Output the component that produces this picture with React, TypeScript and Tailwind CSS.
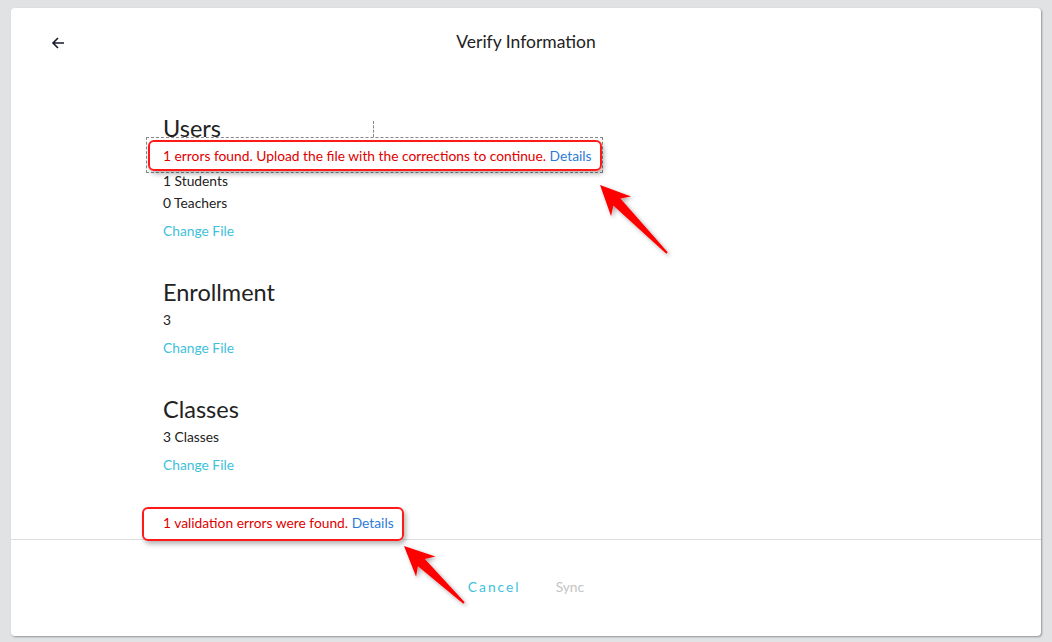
import React from "react";

function Arrow({ className, x1, y1, x2, y2 }: { className: string; x1: number; y1: number; x2: number; y2: number }) {
  const dx = x2 - x1;
  const dy = y2 - y1;
  const len = Math.sqrt(dx * dx + dy * dy);
  const ux = dx / len;
  const uy = dy / len;
  const px = -uy;
  const py = ux;
  const headLen = 30;
  const headW = 14;
  const neckW = 5;
  const bx = x1 + ux * headLen;
  const by = y1 + uy * headLen;
  const nx = x1 + ux * (headLen - 6);
  const ny = y1 + uy * (headLen - 6);
  const pts = [
    [x1, y1],
    [bx + px * headW, by + py * headW],
    [nx + px * neckW, ny + py * neckW],
    [x2 + px * 1, y2 + py * 1],
    [x2 - px * 1, y2 - py * 1],
    [nx - px * neckW, ny - py * neckW],
    [bx - px * headW, by - py * headW],
  ]
    .map((p) => p.join(","))
    .join(" ");
  return (
    <svg className={className} width="1052" height="642" viewBox="0 0 1052 642">
      <defs>
        <filter id="sh" x="-20%" y="-20%" width="140%" height="140%">
          <feDropShadow dx="2" dy="2" stdDeviation="2" floodColor="#000" floodOpacity="0.35" />
        </filter>
      </defs>
      <polygon points={pts} fill="#ff0000" filter="url(#sh)" />
    </svg>
  );
}

export default function App() {
  const font = { fontFamily: "Lato, 'Open Sans', sans-serif" };
  return (
    <div className="relative w-[1052px] h-[642px] bg-[#e1e2e4] overflow-hidden pt-[8px] pl-[11px]" style={font}>
      <div className="w-[1030px] h-[628px] bg-white rounded-[4px] shadow-[1px_1px_2px_rgba(0,0,0,0.35)] flex flex-col">
        <div className="relative h-[70px] flex items-center justify-center">
          <svg className="absolute left-[40px] top-[28px]" width="14" height="14" viewBox="0 0 14 14">
            <path d="M13 7H2M7 2L2 7l5 5" fill="none" stroke="#1a1a2e" strokeWidth="1.6" />
          </svg>
          <div className="text-[17.5px] text-[#222] leading-none mt-[-2px]">Verify Information</div>
        </div>
        <div className="flex-1 pl-[152px] pt-[37px] text-[#222]">
          <div className="text-[23.5px] leading-[26px]">Users</div>
          <div className="text-[13.8px] leading-[18px] mt-[6px] text-[#e00000]">
            1 errors found. Upload the file with the corrections to continue.{" "}
            <span className="text-[#2b7bd6]">Details</span>
          </div>
          <div className="text-[13.8px] leading-[22px] mt-[5px]">1 Students</div>
          <div className="text-[13.8px] leading-[22px]">0 Teachers</div>
          <div className="text-[13.8px] leading-[18px] mt-[8px] text-[#3ebfdb]">Change File</div>

          <div className="text-[23.5px] leading-[26px] mt-[39px]">Enrollment</div>
          <div className="text-[13.8px] leading-[18px] mt-[6px]">3</div>
          <div className="text-[13.8px] leading-[18px] mt-[10px] text-[#3ebfdb]">Change File</div>

          <div className="text-[23.5px] leading-[26px] mt-[39px]">Classes</div>
          <div className="text-[13.8px] leading-[18px] mt-[6px]">3 Classes</div>
          <div className="text-[13.8px] leading-[18px] mt-[10px] text-[#3ebfdb]">Change File</div>

          <div className="text-[13.8px] leading-[18px] mt-[40px] text-[#e00000]">
            1 validation errors were found. <span className="text-[#2b7bd6]">Details</span>
          </div>
        </div>
        <div className="h-[97px] border-t border-[#dedede] flex justify-center items-start pt-[37px] gap-[35px]">
          <div className="text-[13.8px] tracking-[2px] text-[#3ebfdb]">Cancel</div>
          <div className="text-[13.8px] text-[#c4c4c4]">Sync</div>
        </div>
      </div>

      {/* annotations */}
      <div className="absolute left-[146px] top-[137px] w-[457px] h-[36px] border border-dashed border-[#888]" />
      <div className="absolute left-[373px] top-[121px] h-[16px] border-l border-dashed border-[#888]" />
      <div className="absolute left-[148px] top-[140px] w-[454px] h-[31px] border-2 border-[#ff1a1a] rounded-[6px] shadow-[2px_3px_5px_rgba(0,0,0,0.3)]" />
      <div className="absolute left-[142px] top-[507px] w-[262px] h-[34px] border-2 border-[#ff1a1a] rounded-[6px] shadow-[2px_3px_5px_rgba(0,0,0,0.3)]" />
      <Arrow className="absolute left-0 top-0 pointer-events-none" x1={600} y1={185} x2={667} y2={253} />
      <Arrow className="absolute left-0 top-0 pointer-events-none" x1={404} y1={546} x2={464} y2={603} />
    </div>
  );
}
